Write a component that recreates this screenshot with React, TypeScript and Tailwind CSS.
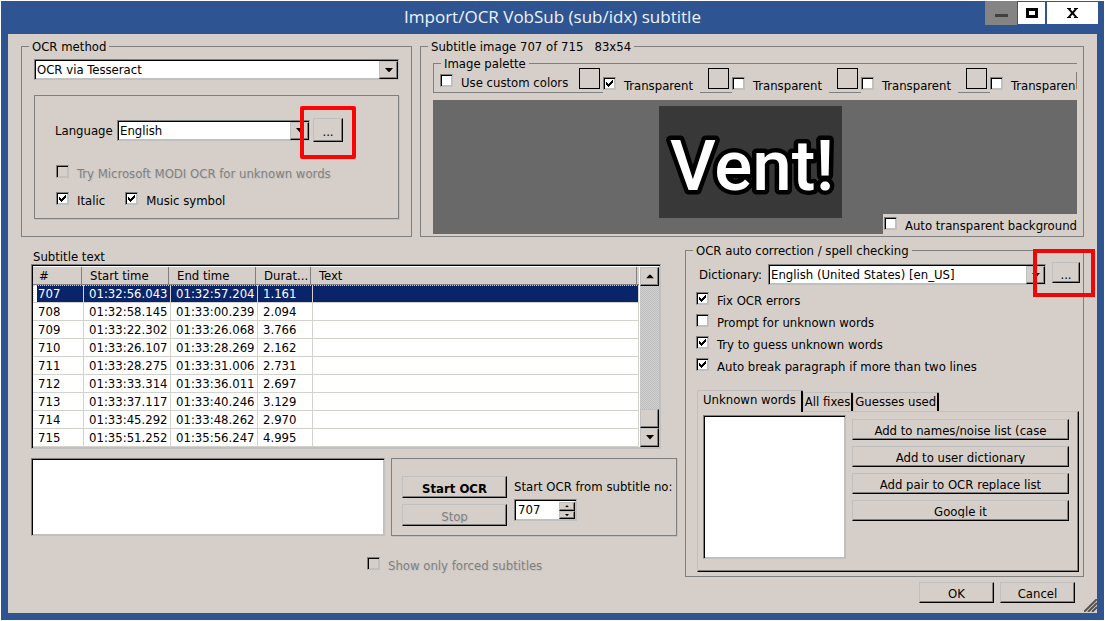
import { useState } from 'react';
import type { ReactNode } from 'react';
import clsx from 'clsx';

const sunken =
  'border border-t-[#808080] border-l-[#808080] border-r-[#c0c0c0] border-b-[#c0c0c0] shadow-[inset_1px_1px_0_#000,inset_-1px_-1px_0_#c0c0c0]';
const raised =
  'border border-t-[#c0c0c0] border-l-[#c0c0c0] border-r-black border-b-black shadow-[inset_-1px_-1px_0_#808080] bg-[#d6cfc9]';
const group = 'border border-[#808080] shadow-[1px_1px_0_#c0c0c0]';

interface Subtitle {
  number: number;
  start: string;
  end: string;
  duration: string;
}

const subtitles: Subtitle[] = [
  { number: 707, start: '01:32:56.043', end: '01:32:57.204', duration: '1.161' },
  { number: 708, start: '01:32:58.145', end: '01:33:00.239', duration: '2.094' },
  { number: 709, start: '01:33:22.302', end: '01:33:26.068', duration: '3.766' },
  { number: 710, start: '01:33:26.107', end: '01:33:28.269', duration: '2.162' },
  { number: 711, start: '01:33:28.275', end: '01:33:31.006', duration: '2.731' },
  { number: 712, start: '01:33:33.314', end: '01:33:36.011', duration: '2.697' },
  { number: 713, start: '01:33:37.117', end: '01:33:40.246', duration: '3.129' },
  { number: 714, start: '01:33:45.292', end: '01:33:48.262', duration: '2.970' },
  { number: 715, start: '01:35:51.252', end: '01:35:56.247', duration: '4.995' },
];

const columns = ['#', 'Start time', 'End time', 'Durat...', 'Text'];

function Arrow({ up = false, small = false }: { up?: boolean; small?: boolean }) {
  return (
    <svg
      viewBox="0 0 9 5"
      className={clsx(small ? 'w-[4px]' : 'w-[8px]', up && 'rotate-180')}
      fill="#000"
      aria-hidden="true"
    >
      <path d="M0 0h9L4.5 5z" />
    </svg>
  );
}

interface CheckboxProps {
  label: string;
  checked?: boolean;
  disabled?: boolean;
  className?: string;
}

function Checkbox({ label, checked = false, disabled = false, className }: CheckboxProps) {
  return (
    <label className={clsx('flex items-start gap-2 whitespace-nowrap', className)}>
      <span className="grid shrink-0">
        <input
          type="checkbox"
          defaultChecked={checked}
          disabled={disabled}
          className={clsx(
            'peer col-start-1 row-start-1 h-[13px] w-[13px] appearance-none',
            sunken,
            disabled ? 'bg-[#d6cfc9]' : 'bg-white'
          )}
        />
        <svg
          viewBox="0 0 7 7"
          className="pointer-events-none invisible col-start-1 row-start-1 m-[3px] h-[7px] w-[7px] peer-checked:visible"
          shapeRendering="crispEdges"
          aria-hidden="true"
        >
          <path d="M0 2v3h1v1h1v1h1V6h1V5h1V4h1V3h1V0H6v1H5v1H4v1H3v1H2V3H1V2z" />
        </svg>
      </span>
      <span className={clsx('pt-px', disabled && 'text-[#808080] [text-shadow:1px_1px_0_#c4c2c0]')}>
        {label}
      </span>
    </label>
  );
}

function Dropdown({ id, value, className }: { id: string; value: string; className?: string }) {
  return (
    <div className={clsx('relative h-[21px]', className)}>
      <select
        id={id}
        aria-label={value}
        className={clsx('block h-full w-full appearance-none bg-white pt-px pr-5 pl-[2px] outline-none', sunken)}
      >
        <option>{value}</option>
      </select>
      <span
        className={clsx(
          'pointer-events-none absolute top-[2px] right-px bottom-px flex w-[19px] items-center justify-center',
          raised
        )}
      >
        <Arrow />
      </span>
    </div>
  );
}

function GroupBox({ title, className, children }: { title: string; className?: string; children: ReactNode }) {
  return (
    <fieldset className={clsx('min-w-0 border border-[#808080]', className)}>
      <legend className="px-[3px] pt-[2px] whitespace-pre">{title}</legend>
      {children}
    </fieldset>
  );
}

function Palette() {
  const transparent = [true, false, false, false];

  return (
    <fieldset className="relative min-w-0 border-t border-l border-[#808080]">
      <legend className="ml-[7px] px-[3px] pt-[2px]">Image palette</legend>
      <span className="absolute top-0 right-0 h-3 w-px bg-[#808080]" />
      <div className="-mt-1 flex h-[25px] overflow-hidden">
        <div className="w-[137px] shrink-0 border-b border-[#808080] pt-[6px] pl-[6px]">
          <Checkbox label="Use custom colors" />
        </div>
        {transparent.map((checked, i) => (
          <div key={i} className="flex shrink-0">
            <div className="w-8 border-b border-[#808080] pl-2">
              <button
                type="button"
                aria-label={`Color ${i + 1}`}
                className="block h-[21px] w-[21px] border border-black"
              />
            </div>
            <Checkbox label="Transparent" checked={checked} className="w-[97px] pt-[9px]" />
          </div>
        ))}
      </div>
    </fieldset>
  );
}

function SubtitleImage() {
  return (
    <div className="relative mt-[7px] flex h-[134px] justify-center bg-[#696969] pt-[6px] pr-[10px]">
      <svg viewBox="0 0 183 112" className="h-[112px] w-[183px] bg-[#383838]">
        <text
          x="11"
          y="84"
          fontFamily="Roboto, sans-serif"
          fontWeight="500"
          fontSize="71"
          fill="#fff"
          stroke="#000"
          strokeWidth="9"
          strokeLinejoin="round"
          paintOrder="stroke"
        >
          Vent!
        </text>
      </svg>
      <div className="absolute right-0 bottom-0 bg-[#d6cfc9] pt-[3px] pl-px">
        <Checkbox label="Auto transparent background" />
      </div>
    </div>
  );
}

function SubtitleTable() {
  const [selected, setSelected] = useState(707);

  return (
    <div className={clsx('mr-4 flex bg-white p-px', sunken)}>
      <table className="mt-px flex-1 table-fixed border-separate border-spacing-0 text-left">
        <colgroup>
          <col className="w-[51px]" />
          <col className="w-[87px]" />
          <col className="w-[87px]" />
          <col className="w-[55px]" />
          <col />
        </colgroup>
        <thead>
          <tr className="h-[18px] bg-[#d6cfc9]">
            {columns.map((name) => (
              <th key={name} className="border-b border-[#808080] p-0 pr-[2px] font-normal">
                <div className="h-[17px] border-r border-[#808080] pl-[6px] leading-[18px]">{name}</div>
              </th>
            ))}
          </tr>
        </thead>
        <tbody>
          {subtitles.map((s) => {
            const active = s.number === selected;
            const cell = clsx(
              'border-r border-b border-[#d4d2cd] p-0 pl-[5px]',
              active && 'bg-[#0a246a] text-white'
            );
            return (
              <tr
                key={s.number}
                className={clsx('h-[18px]', active && 'outline-1 -outline-offset-1 outline-dotted outline-[#d4d2cd]')}
                onClick={() => setSelected(s.number)}
              >
                <td className={clsx(cell, active && 'bg-clip-padding shadow-[inset_4px_0_0_#fff]')}>
                  <span>{s.number}</span>
                </td>
                <td className={cell}>{s.start}</td>
                <td className={cell}>{s.end}</td>
                <td className={cell}>{s.duration}</td>
                <td className={cell}></td>
              </tr>
            );
          })}
        </tbody>
      </table>
      <div className="mt-px ml-px flex w-[19px] flex-col bg-[conic-gradient(#bfbfbf_25%,#d6cfc9_0_50%,#bfbfbf_0_75%,#d6cfc9_0)] bg-[length:2px_2px]">
        <button type="button" aria-label="Scroll up" className={clsx('flex h-[19px] items-center justify-center', raised)}>
          <Arrow up />
        </button>
        <div className={clsx('mt-auto h-[19px]', raised)} />
        <button type="button" aria-label="Scroll down" className={clsx('flex h-[19px] items-center justify-center', raised)}>
          <Arrow />
        </button>
      </div>
    </div>
  );
}

function StartPanel() {
  return (
    <div className={clsx('flex w-[286px] shrink-0 gap-[7px] pt-[17px] pl-[10px]', group)}>
      <div className="flex w-[105px] flex-col gap-[6px]">
        <button type="button" className={clsx('h-[22px] pt-[3px] leading-4 font-bold', raised)}>
          Start OCR
        </button>
        <button
          type="button"
          disabled
          className={clsx('h-[22px] pt-[2px] text-[#808080] [text-shadow:1px_1px_0_#c4c2c0]', raised)}
        >
          <span className="block h-[14px] overflow-hidden">Stop</span>
        </button>
      </div>
      <div className="pt-[3px]">
        <label htmlFor="start-number" className="block whitespace-nowrap">
          Start OCR from subtitle no:
        </label>
        <div className={clsx('mt-1 flex h-[22px] w-[63px] bg-white p-px', sunken)}>
          <input id="start-number" defaultValue="707" className="w-full min-w-0 flex-1 bg-transparent pl-[2px] outline-none" />
          <div className="mt-px flex w-4 flex-col">
            <button type="button" aria-label="Increase" className={clsx('flex flex-1 items-center justify-center', raised)}>
              <Arrow up small />
            </button>
            <button type="button" aria-label="Decrease" className={clsx('flex flex-1 items-center justify-center', raised)}>
              <Arrow small />
            </button>
          </div>
        </div>
      </div>
    </div>
  );
}

function WordTabs() {
  const tabs = ['Unknown words', 'All fixes', 'Guesses used'];
  const actions = [
    'Add to names/noise list (case',
    'Add to user dictionary',
    'Add pair to OCR replace list',
    'Google it',
  ];
  const [current, setCurrent] = useState(tabs[0]);

  return (
    <div className="mt-[14px] mr-px ml-px">
      <div role="tablist" className="flex h-[22px] items-end">
        {tabs.map((tab) => (
          <button
            key={tab}
            type="button"
            role="tab"
            aria-selected={tab === current}
            onClick={() => setCurrent(tab)}
            className={clsx(
              'rounded-t-[2px] border-t border-l border-t-[#c0c0c0] border-l-[#c0c0c0] border-r-2 border-r-black whitespace-nowrap',
              tab === current ? 'relative z-10 h-[22px] bg-[#d6cfc9] px-[5px] pb-[3px]' : 'mb-px h-[19px] px-px'
            )}
          >
            {tab}
          </button>
        ))}
      </div>
      <div className={clsx('-mt-px flex gap-[6px] pt-[3px] pr-[9px] pb-3 pl-[5px]', raised)}>
        <textarea
          aria-label={current}
          className={clsx('block h-[144px] w-[143px] resize-none bg-white p-1 outline-none', sunken)}
        />
        <div className="flex flex-1 flex-col gap-[6px] pt-1">
          {/* The buttons are too low for their captions, so the descenders are clipped */}
          {actions.map((action) => (
            <button key={action} type="button" className={clsx('flex h-[21px] justify-center pt-[3px]', raised)}>
              <span className="block h-[14px] overflow-hidden whitespace-nowrap">{action}</span>
            </button>
          ))}
        </div>
      </div>
    </div>
  );
}

export default function App() {
  return (
    <div className="min-h-screen bg-white p-px font-['DejaVu_Sans_Condensed','DejaVu_Sans',sans-serif] text-[13px] leading-4 text-black">
      <div className="bg-[#2e5591] px-[7px] pb-[7px]">
        {/* Title bar */}
        <header className="relative flex h-[33px] items-center justify-center">
          <h1 className="pb-[2px] font-['Open_Sans',sans-serif] text-[17px] leading-6 text-[#eef3fa]">
            Import/OCR VobSub (sub/idx) subtitle
          </h1>
          <div className="absolute top-0 -right-px flex gap-px">
            <button type="button" aria-label="Minimize" className="flex h-6 w-8 items-center justify-center bg-[#848484] pt-[5px]">
              <span className="h-[3px] w-[13px] bg-[#404040]" />
            </button>
            <button type="button" aria-label="Maximize" className="mt-px flex h-[22px] w-[27px] items-center justify-center bg-white">
              <span className="h-[10px] w-3 border-3 border-black" />
            </button>
            <button type="button" aria-label="Close" className="mt-px ml-px flex h-[22px] w-[51px] items-center justify-center bg-white">
              <svg viewBox="0 0 11 10" className="h-[10px] w-[11px]" aria-hidden="true">
                <path d="M0 0h4v1h-.8l2.300 2.500L7.800 1H7V0h4v1h-.8L6.900 5l3.300 4h.8v1H7V9h.8L5.500 6.500 3.200 9H4v1H0V9h.8l3.300-4L.8 1H0z" />
              </svg>
            </button>
          </div>
        </header>

        <main className="relative bg-[#d6cfc9] px-[13px] pt-[3px] pb-[10px]">
          <div className="flex gap-2">
            <GroupBox title="OCR method" className="w-[391px] shrink-0 px-3 pb-4 [&>legend]:-ml-[5px]">
              <Dropdown id="ocr-method" value="OCR via Tesseract" className="mt-1" />
              <div className={clsx('mt-[15px] h-[124px] pt-[22px] pl-5', group)}>
                <div className="flex items-center">
                  <label htmlFor="language" className="w-[62px] pt-[2px]">
                    Language
                  </label>
                  <Dropdown id="language" value="English" className="w-[193px]" />
                  <div className="relative ml-[3px]">
                    <button type="button" className={clsx('block h-6 w-[30px] pt-1', raised)}>
                      ...
                    </button>
                    <span className="pointer-events-none absolute -inset-x-[13px] -top-3 -bottom-[17px] rounded-[2px] border-4 border-[#fa0505]" />
                  </div>
                </div>
                <Checkbox label="Try Microsoft MODI OCR for unknown words" disabled className="mt-[23px] ml-px" />
                <div className="mt-[10px] ml-px flex gap-5">
                  <Checkbox label="Italic" checked />
                  <Checkbox label="Music symbol" checked />
                </div>
              </div>
            </GroupBox>

            <GroupBox title="Subtitle image 707 of 715   83x54" className="flex-1 pr-[6px] pb-[2px] pl-3 [&>legend]:-ml-[5px]">
              <div className="-mt-px">
                <Palette />
                <SubtitleImage />
              </div>
            </GroupBox>
          </div>

          <div className="mt-1 flex gap-2">
            <section className="min-w-0 flex-1 pt-2 pl-[10px]">
              <h2 className="h-[15px] pl-[2px]">Subtitle text</h2>
              <SubtitleTable />
              <div className="mt-[9px] flex h-[78px] gap-[6px]">
                <textarea aria-label="Subtitle text" className={clsx('min-w-0 flex-1 resize-none bg-white p-1 outline-none', sunken)} />
                <StartPanel />
              </div>
              <Checkbox label="Show only forced subtitles" disabled className="mt-[21px] pl-[336px]" />
            </section>

            <GroupBox
              title="OCR auto correction / spell checking"
              className="w-[399px] shrink-0 pr-[3px] pb-1 pl-[10px] [&>legend]:-ml-[3px]"
            >
              <div className="mt-[3px] flex items-start pl-[3px]">
                <label htmlFor="dictionary" className="w-[69px] pt-[5px]">
                  Dictionary:
                </label>
                <Dropdown id="dictionary" value="English (United States) [en_US]" className="mt-[2px] flex-1" />
                <div className="relative ml-[6px]">
                  <button type="button" className={clsx('block h-[21px] w-7 pt-1', raised)}>
                    ...
                  </button>
                  <span className="pointer-events-none absolute -top-[13px] -right-[15px] -bottom-[14px] -left-[19px] z-10 border-4 border-[#ec0808]" />
                </div>
              </div>
              <div className="mt-[7px] mb-[15px] flex flex-col gap-[5px]">
                <Checkbox label="Fix OCR errors" checked />
                <Checkbox label="Prompt for unknown words" />
                <Checkbox label="Try to guess unknown words" checked />
                <Checkbox label="Auto break paragraph if more than two lines" checked />
              </div>
              <WordTabs />
            </GroupBox>
          </div>

          <footer className="mt-[5px] flex justify-end gap-[6px] pr-[9px]">
            <button type="button" className={clsx('h-[21px] w-[75px] pt-[3px]', raised)}>
              OK
            </button>
            <button type="button" className={clsx('h-[21px] w-[75px] pt-[3px]', raised)}>
              Cancel
            </button>
          </footer>
          <svg viewBox="0 0 13 13" className="absolute right-0 bottom-px h-[13px] w-[13px]" stroke="#555" strokeWidth="2" aria-hidden="true">
            <path d="M0 13 13 0M4 13l9-9M8 13l5-5" />
          </svg>
        </main>
      </div>
    </div>
  );
}
